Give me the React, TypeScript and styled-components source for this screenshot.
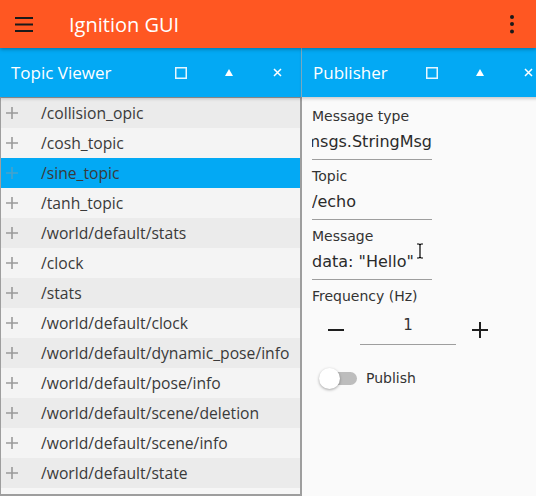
import * as React from "react";
import styled, { createGlobalStyle } from "styled-components";

const GlobalStyle = createGlobalStyle`
  html, body {
    margin: 0;
    padding: 0;
    overflow: hidden;
    background: #fafafa;
  }
`;

const topics = [
  "/collision_opic",
  "/cosh_topic",
  "/sine_topic",
  "/tanh_topic",
  "/world/default/stats",
  "/clock",
  "/stats",
  "/world/default/clock",
  "/world/default/dynamic_pose/info",
  "/world/default/pose/info",
  "/world/default/scene/deletion",
  "/world/default/scene/info",
  "/world/default/state",
];

const Window = styled.div`
  width: 536px;
  height: 496px;
  display: flex;
  flex-direction: column;
  overflow: hidden;
  background: #fafafa;
  position: relative;
`;

const AppBar = styled.header`
  height: 48px;
  flex-shrink: 0;
  display: flex;
  align-items: center;
  background: #ff5722;
  box-shadow: 0 1px 4px rgba(0, 0, 0, 0.35);
  position: relative;
  z-index: 2;
`;

const BarButton = styled.button`
  width: 48px;
  height: 48px;
  padding: 0;
  border: 0;
  background: transparent;
  display: flex;
  align-items: center;
  justify-content: center;
`;

const AppTitle = styled.h1`
  margin: 0 0 0 21px;
  flex: 1;
  font-family: "Open Sans", sans-serif;
  font-weight: 400;
  font-size: 20px;
  color: #ffffff;
`;

const Workspace = styled.div`
  flex: 1;
  min-height: 0;
  display: flex;
`;

const Panel = styled.section<{ $width: number }>`
  width: ${(p) => p.$width}px;
  flex-shrink: 0;
  display: flex;
  flex-direction: column;
`;

const PanelHeader = styled.div<{ $divider?: boolean }>`
  height: 49px;
  flex-shrink: 0;
  display: flex;
  align-items: center;
  background: #03a9f4;
  border-right: ${(p) => (p.$divider ? "1px solid #7fb6cf" : "0")};
  box-shadow: 0 2px 3px rgba(0, 0, 0, 0.18);
  position: relative;
  z-index: 1;
`;

const PanelTitle = styled.span`
  flex: 1;
  padding-left: 11px;
  font-family: "Open Sans", sans-serif;
  font-size: 17px;
  color: #ffffff;
`;

const HeaderButton = styled.button`
  width: 48px;
  height: 49px;
  padding: 0;
  border: 0;
  background: transparent;
  display: flex;
  align-items: center;
  justify-content: center;
`;

const TopicList = styled.ul`
  flex: 1;
  margin: 0;
  padding: 0;
  list-style: none;
  background: #f6f6f6;
  border: 1px solid #9e9e9e;
  border-right-width: 2px;
  border-bottom-width: 2px;
  overflow: hidden;
`;

const TopicRow = styled.li<{ $selected?: boolean }>`
  height: 30px;
  display: flex;
  align-items: center;
  padding-left: 5px;
  background: #f4f4f4;
  &:nth-child(odd) {
    background: #ebebeb;
  }
  && {
    background: ${(p) => (p.$selected ? "#03a9f4" : undefined)};
  }
  svg {
    opacity: ${(p) => (p.$selected ? 0.45 : 1)};
  }
`;

const TopicName = styled.span`
  margin-left: 23px;
  font-family: "Open Sans", sans-serif;
  font-size: 15.7px;
  color: #3a3a3a;
  white-space: nowrap;
`;

const PublisherBody = styled.div`
  flex: 1;
  padding: 9px 0 0 10px;
  display: flex;
  flex-direction: column;
  font-family: "DejaVu Sans", sans-serif;
  position: relative;
`;

const Field = styled.div`
  display: flex;
  flex-direction: column;
  margin-bottom: 6px;
`;

const Label = styled.label<{ $gap?: number }>`
  height: 20px;
  line-height: 20px;
  font-size: 14px;
  color: #333333;
  margin-bottom: ${(p) => p.$gap ?? 4}px;
  white-space: nowrap;
`;

const Value = styled.div<{ $scrolled?: boolean }>`
  width: 120px;
  line-height: 24px;
  padding-bottom: 5px;
  font-size: 16px;
  color: #2a2a2a;
  border-bottom: 1px solid #9e9e9e;
  overflow: hidden;
  white-space: nowrap;
  display: flex;
  justify-content: ${(p) => (p.$scrolled ? "flex-end" : "flex-start")};
`;

const SpinRow = styled.div`
  display: flex;
  align-items: stretch;
  height: 39px;
`;

const SpinButton = styled.button`
  width: 48px;
  padding: 8px 0 0;
  border: 0;
  background: transparent;
  display: flex;
  align-items: center;
  justify-content: center;
`;

const SpinValue = styled.div`
  width: 96px;
  border-bottom: 1px solid #9e9e9e;
  display: flex;
  align-items: center;
  justify-content: center;
  font-size: 15px;
  color: #333333;
`;

const SwitchRow = styled.div`
  display: flex;
  align-items: center;
  height: 28px;
  margin-top: 19px;
  padding-left: 8px;
  gap: 9px;
`;

const SwitchTrack = styled.div`
  width: 37px;
  height: 13px;
  border-radius: 7px;
  background: #bdbdbd;
  position: relative;
`;

const SwitchKnob = styled.div`
  position: absolute;
  left: -1px;
  top: -4px;
  width: 21px;
  height: 21px;
  border-radius: 50%;
  background: #ffffff;
  box-shadow: 0 1px 3px rgba(0, 0, 0, 0.35);
`;

const SwitchLabel = styled.span`
  font-size: 14px;
  color: #333333;
`;

const Cursor = styled.svg`
  position: absolute;
  left: 416px;
  top: 243px;
`;

const Hamburger = () => (
  <svg width="18" height="16" viewBox="0 0 18 16">
    <g fill="#1a1a1a">
      <rect x="0" y="1" width="18" height="2" />
      <rect x="0" y="7.5" width="18" height="2" />
      <rect x="0" y="14" width="18" height="2" />
    </g>
  </svg>
);

const Kebab = () => (
  <svg width="6" height="20" viewBox="0 0 6 20">
    <g fill="#1a1a1a">
      <circle cx="3" cy="3" r="2" />
      <circle cx="3" cy="10" r="2" />
      <circle cx="3" cy="17.5" r="2" />
    </g>
  </svg>
);

const SquareIcon = () => (
  <svg width="12" height="12" viewBox="0 0 12 12">
    <rect x="0.75" y="0.75" width="10.5" height="10.5" fill="none" stroke="#e6f6fe" strokeWidth="1.5" />
  </svg>
);

const TriangleIcon = () => (
  <svg width="8" height="7" viewBox="0 0 8 7">
    <polygon points="4,0 8,7 0,7" fill="#ffffff" />
  </svg>
);

const CloseIcon = () => (
  <svg width="9" height="9" viewBox="0 0 9 9">
    <path d="M1 1 L8 8 M8 1 L1 8" stroke="#ffffff" strokeWidth="1.5" />
  </svg>
);

const PlusIcon: React.FC<{ size?: number; color?: string; weight?: number }> = ({
  size = 12,
  color = "#9a9a9a",
  weight = 1.6,
}) => (
  <svg width={size} height={size} viewBox={`0 0 ${size} ${size}`}>
    <path
      d={`M${size / 2} 0 V${size} M0 ${size / 2} H${size}`}
      stroke={color}
      strokeWidth={weight}
    />
  </svg>
);

const MinusIcon = () => (
  <svg width="16" height="16" viewBox="0 0 16 16">
    <path d="M0 8 H16" stroke="#1e1e1e" strokeWidth="2" />
  </svg>
);

const PanelControls = () => (
  <>
    <HeaderButton>
      <SquareIcon />
    </HeaderButton>
    <HeaderButton>
      <TriangleIcon />
    </HeaderButton>
    <HeaderButton>
      <CloseIcon />
    </HeaderButton>
  </>
);

const App: React.FC = () => {
  return (
    <Window>
      <GlobalStyle />
      <AppBar>
        <BarButton>
          <Hamburger />
        </BarButton>
        <AppTitle>Ignition GUI</AppTitle>
        <BarButton>
          <Kebab />
        </BarButton>
      </AppBar>
      <Workspace>
        <Panel $width={302}>
          <PanelHeader $divider>
            <PanelTitle>Topic Viewer</PanelTitle>
            <PanelControls />
          </PanelHeader>
          <TopicList>
            {topics.map((t) => (
              <TopicRow key={t} $selected={t === "/sine_topic"}>
                <PlusIcon />
                <TopicName>{t}</TopicName>
              </TopicRow>
            ))}
          </TopicList>
        </Panel>
        <Panel $width={250}>
          <PanelHeader>
            <PanelTitle>Publisher</PanelTitle>
            <PanelControls />
          </PanelHeader>
          <PublisherBody>
            <Field>
              <Label>Message type</Label>
              <Value $scrolled>ignition.msgs.StringMsg</Value>
            </Field>
            <Field>
              <Label>Topic</Label>
              <Value>/echo</Value>
            </Field>
            <Field>
              <Label>Message</Label>
              <Value>data: "Hello"</Value>
            </Field>
            <Label $gap={0}>Frequency (Hz)</Label>
            <SpinRow>
              <SpinButton>
                <MinusIcon />
              </SpinButton>
              <SpinValue>1</SpinValue>
              <SpinButton>
                <PlusIcon size={16} color="#1e1e1e" weight={2} />
              </SpinButton>
            </SpinRow>
            <SwitchRow>
              <SwitchTrack>
                <SwitchKnob />
              </SwitchTrack>
              <SwitchLabel>Publish</SwitchLabel>
            </SwitchRow>
          </PublisherBody>
        </Panel>
      </Workspace>
      <Cursor width="8" height="16" viewBox="0 0 8 16">
        <path
          d="M1 1 H3 L4 2 L5 1 H7 M4 2 V14 M1 15 H3 L4 14 L5 15 H7"
          fill="none"
          stroke="#ffffff"
          strokeWidth="3"
        />
        <path
          d="M1 1 H3 L4 2 L5 1 H7 M4 2 V14 M1 15 H3 L4 14 L5 15 H7"
          fill="none"
          stroke="#000000"
          strokeWidth="1.2"
        />
      </Cursor>
    </Window>
  );
};

export default App;
